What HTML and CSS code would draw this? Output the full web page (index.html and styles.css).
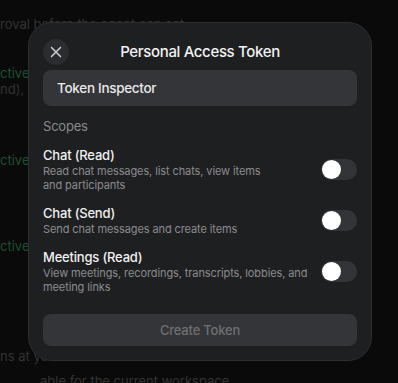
FILE: index.html
```html
<!DOCTYPE html>
<html lang="en">
<head>
<meta charset="utf-8">
<title>Personal Access Token</title>
<link rel="stylesheet" href="styles.css">
</head>
<body>
<div class="page">
  <p class="bg-line l1">roval before the agent can act</p>
  <p class="bg-line l2"><span class="ok">ctive ·</span> Ch</p>
  <p class="bg-line l3">nd), Me</p>
  <p class="bg-line l4"><span class="ok">ctive</span></p>
  <p class="bg-line l5"><span class="ok">ctive ·</span></p>
  <div class="bg-sep"></div>
  <p class="bg-line l6">ns at your</p>
  <p class="bg-line l7">able for the current workspace</p>
</div>

<div class="modal" role="dialog" aria-label="Personal Access Token">
  <div class="modal-head">
    <button class="close" aria-label="Close">
      <svg width="12" height="12" viewBox="0 0 12 12" fill="none" stroke="#d0d0d2" stroke-width="1.5" stroke-linecap="round"><path d="M1.5 1.5L10.5 10.5M10.5 1.5L1.5 10.5"/></svg>
    </button>
    <h1 class="title">Personal Access Token</h1>
    <span></span>
  </div>
  <div class="input">Token Inspector</div>
  <div class="section-label">Scopes</div>
  <div class="scopes">
    <div class="scope">
      <div class="scope-text">
        <div class="scope-name">Chat (Read)</div>
        <div class="scope-desc">Read chat messages, list chats, view items and participants</div>
      </div>
      <span class="toggle"><span class="knob"></span></span>
    </div>
    <div class="scope">
      <div class="scope-text">
        <div class="scope-name">Chat (Send)</div>
        <div class="scope-desc">Send chat messages and create items</div>
      </div>
      <span class="toggle"><span class="knob"></span></span>
    </div>
    <div class="scope">
      <div class="scope-text">
        <div class="scope-name">Meetings (Read)</div>
        <div class="scope-desc">View meetings, recordings, transcripts, lobbies, and meeting links</div>
      </div>
      <span class="toggle"><span class="knob"></span></span>
    </div>
  </div>
  <button class="create" disabled>Create Token</button>
</div>
</body>
</html>
```

FILE: styles.css
```css
* { box-sizing: border-box; }
html, body { margin: 0; padding: 0; }
body {
  width: 398px;
  height: 383px;
  overflow: hidden;
  background: #0a0a0a;
  font-family: Inter, "Noto Sans", sans-serif;
  position: relative;
}
.page {
  display: flex;
  flex-direction: column;
  height: 383px;
}
.bg-line {
  margin: 0;
  font-size: 13px;
  line-height: 16px;
  color: #333333;
  white-space: nowrap;
}
.bg-line .ok { color: #1d4f35; }
.l1 { margin-top: 16px; }
.l2 { margin-top: 33px; }
.l3 { margin-top: 0; }
.l4 { margin-top: 55px; }
.l5 { margin-top: 70px; }
.bg-sep { margin-top: 53px; height: 1px; background: #191919; }
.l6 { margin-top: 41px; }
.l7 { margin-top: 9px; padding-left: 40px; }

.modal {
  position: absolute;
  left: 28px;
  top: 22px;
  width: 344px;
  height: 339px;
  background: #1e1f21;
  border: 1px solid #2d2e31;
  border-radius: 24px;
  padding: 15px 14px 14px;
  display: flex;
  flex-direction: column;
}
.modal-head {
  display: grid;
  grid-template-columns: 26px 1fr 26px;
  align-items: center;
  height: 26px;
  margin-top: 1px;
}
.close {
  width: 26px;
  height: 26px;
  border-radius: 50%;
  border: none;
  padding: 0;
  background: #2b2c2f;
  display: flex;
  align-items: center;
  justify-content: center;
}
.title {
  margin: 0;
  text-align: center;
  font-size: 15px;
  font-weight: 500;
  letter-spacing: -0.35px;
  color: #f2f2f3;
  line-height: 20px;
}
.input {
  margin-top: 5px;
  height: 36px;
  border-radius: 8px;
  background: #343538;
  padding: 0 14px;
  display: flex;
  align-items: center;
  font-size: 13.5px;
  letter-spacing: -0.3px;
  font-weight: 500;
  color: #e8e8ea;
}
.section-label {
  margin-top: 11px;
  font-size: 13px;
  letter-spacing: -0.2px;
  line-height: 18px;
  color: #8a8a8d;
}
.scopes {
  margin-top: 11px;
  display: flex;
  flex-direction: column;
  gap: 12px;
}
.scope {
  display: flex;
  align-items: center;
  gap: 10px;
}
.scope-text { flex: 1; min-width: 0; }
.scope-name {
  font-size: 13px;
  line-height: 18px;
  font-weight: 500;
  letter-spacing: -0.2px;
  color: #f0f0f1;
}
.scope-desc {
  font-size: 11px;
  line-height: 14px;
  letter-spacing: -0.1px;
  color: #8c8c8f;
  text-wrap: pretty;
}
.toggle {
  flex: none;
  width: 36px;
  height: 21px;
  border-radius: 11px;
  background: #333437;
  display: flex;
  align-items: center;
  padding-left: 1px;
}
.knob {
  width: 19px;
  height: 19px;
  border-radius: 50%;
  background: #ffffff;
}
.create {
  margin-top: 20px;
  height: 32px;
  border: none;
  border-radius: 8px;
  background: #343538;
  color: #6e6f72;
  font-family: inherit;
  font-size: 13px;
  letter-spacing: -0.2px;
  font-weight: 500;
}
```
